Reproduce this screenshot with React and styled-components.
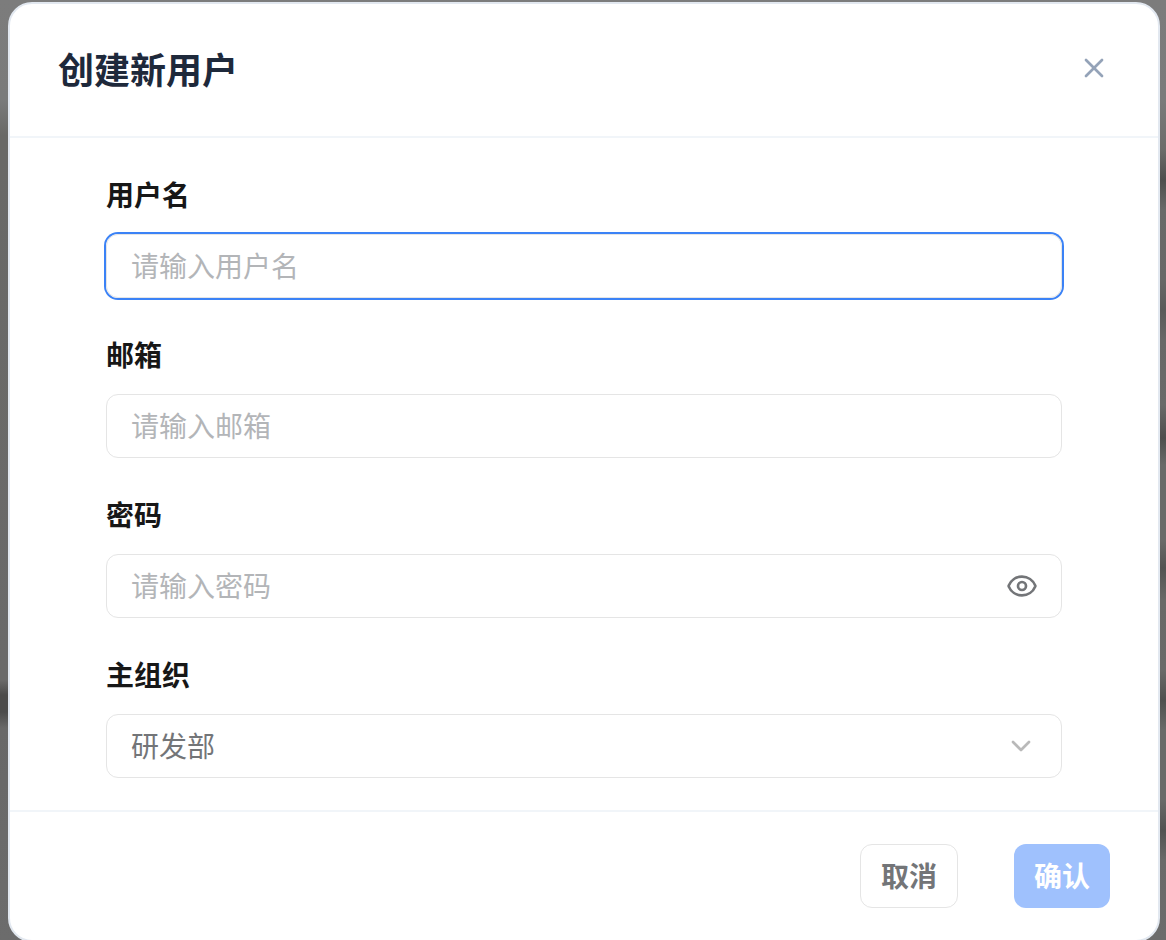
import React, { useState } from 'react';
import styled, { createGlobalStyle } from 'styled-components';
import { ChevronDown, Eye, X } from 'lucide-react';

const GlobalStyle = createGlobalStyle`
  *, *::before, *::after {
    box-sizing: border-box;
  }
  body {
    margin: 0;
    font-family: 'Noto Sans CJK SC', 'Noto Sans', sans-serif;
  }
  button, input, select {
    font-family: inherit;
    margin: 0;
  }
`;

const Overlay = styled.div`
  height: 100vh;
  overflow: hidden;
  padding: 2px 6px 0 8px;
  background:
    linear-gradient(
        #7c7c7c 0,
        #7a7b7b 100px,
        #696967 135px,
        #6a6a6a 680px,
        #4b4b4b 695px,
        #4b4b4b 712px,
        #686868 728px,
        #6c6c6c 940px
      )
      left / 50% 100% no-repeat,
    linear-gradient(
        #7c7c7c 0,
        #7a7b7b 100px,
        #6c6c6a 150px,
        #4e4e4d 180px,
        #696a69 210px,
        #686867 280px,
        #5a5a59 310px,
        #686867 340px,
        #6a6a69 405px,
        #4e4e4d 438px,
        #696a69 465px,
        #6a6a69 540px,
        #535352 568px,
        #696967 600px,
        #6a6a69 670px,
        #4f4f4e 700px,
        #696a69 730px,
        #6a6a69 800px,
        #525251 830px,
        #6a6a69 860px,
        #6c6c6c 940px
      )
      right / 50% 100% no-repeat;
`;

const Dialog = styled.form`
  display: flex;
  flex-direction: column;
  background: #fff;
  border: 2px solid #e2e8f0;
  border-radius: 24px;
`;

const Header = styled.header`
  display: flex;
  align-items: center;
  justify-content: space-between;
  padding: 48px 48px 52px;
  border-bottom: 2px solid #f1f5f9;
`;

const Title = styled.h2`
  margin: 0;
  font-size: 36px;
  line-height: 32px;
  font-weight: 700;
  color: #1e293b;
`;

const IconButton = styled.button`
  display: flex;
  padding: 0;
  border: 0;
  background: none;
  color: ${(props) => props.$color};
  cursor: pointer;
`;

const Body = styled.div`
  display: flex;
  flex-direction: column;
  gap: 32px;
  padding: 32px 96px;
`;

const Field = styled.div`
  display: flex;
  flex-direction: column;
  gap: 16px;
`;

const Label = styled.label`
  font-size: 28px;
  line-height: 48px;
  font-weight: 700;
  color: #171717;
`;

const Control = styled.div`
  display: flex;
  align-items: center;
  height: 64px;
  padding-right: 23px;
  border: 1px solid #e5e5e5;
  border-radius: 12px;

  &:has(input:focus) {
    box-shadow: 0 0 0 2px #3b82f6;
  }
`;

const TextInput = styled.input`
  flex: 1;
  min-width: 0;
  height: 100%;
  padding: 0 0 2px 24px;
  border: 0;
  outline: 0;
  background: none;
  font-size: 28px;
  color: #171717;
  caret-color: transparent;

  &::placeholder {
    color: #b3b5b8;
    opacity: 1;
  }
`;

const SelectBox = styled.div`
  display: grid;
  align-items: center;
  color: #b9b9b9;

  > * {
    grid-area: 1 / 1;
  }
  > svg {
    justify-self: end;
    margin-right: 25px;
    pointer-events: none;
  }
`;

const Select = styled.select`
  appearance: none;
  width: 100%;
  height: 64px;
  padding: 0 64px 2px 24px;
  border: 1px solid #e5e5e5;
  border-radius: 12px;
  background: none;
  font-size: 28px;
  color: #737578;
`;

const Footer = styled.footer`
  display: flex;
  justify-content: flex-end;
  gap: 56px;
  padding: 32px 48px;
  border-top: 2px solid #f1f5f9;
`;

const Button = styled.button`
  height: 64px;
  padding: 0 20px 2px;
  border: ${(props) => (props.$primary ? '0' : '1px solid #e5e5e5')};
  border-radius: 12px;
  background: ${(props) => (props.$primary ? '#9fc1fd' : '#fff')};
  color: ${(props) => (props.$primary ? '#fff' : '#737578')};
  font-size: 28px;
  font-weight: 700;
`;

const App = () => {
  const [values, setValues] = useState({
    username: '',
    email: '',
    password: '',
    org: '研发部',
  });
  const [visible, setVisible] = useState(false);

  const handleChange = (e) =>
    setValues({ ...values, [e.target.name]: e.target.value });

  const complete = values.username && values.email && values.password;

  return (
    <>
      <GlobalStyle />
      <Overlay>
        <Dialog
          role='dialog'
          aria-labelledby='dialog-title'
          onSubmit={(e) => e.preventDefault()}
        >
          <Header>
            <Title id='dialog-title'>创建新用户</Title>
            <IconButton type='button' aria-label='关闭' $color='#94a3b8'>
              <X size={32} />
            </IconButton>
          </Header>
          <Body>
            <Field>
              <Label htmlFor='username'>用户名</Label>
              <Control>
                <TextInput
                  id='username'
                  name='username'
                  placeholder='请输入用户名'
                  value={values.username}
                  onChange={handleChange}
                  autoComplete='off'
                  autoFocus
                />
              </Control>
            </Field>
            <Field>
              <Label htmlFor='email'>邮箱</Label>
              <Control>
                <TextInput
                  id='email'
                  name='email'
                  type='email'
                  placeholder='请输入邮箱'
                  value={values.email}
                  onChange={handleChange}
                />
              </Control>
            </Field>
            <Field>
              <Label htmlFor='password'>密码</Label>
              <Control>
                <TextInput
                  id='password'
                  name='password'
                  type={visible ? 'text' : 'password'}
                  placeholder='请输入密码'
                  value={values.password}
                  onChange={handleChange}
                />
                <IconButton
                  type='button'
                  aria-label='显示密码'
                  $color='#737578'
                  onClick={() => setVisible(!visible)}
                >
                  <Eye size={32} />
                </IconButton>
              </Control>
            </Field>
            <Field>
              <Label htmlFor='org'>主组织</Label>
              <SelectBox>
                <Select
                  id='org'
                  name='org'
                  value={values.org}
                  onChange={handleChange}
                >
                  <option>研发部</option>
                </Select>
                <ChevronDown size={32} />
              </SelectBox>
            </Field>
          </Body>
          <Footer>
            <Button type='button'>取消</Button>
            <Button type='submit' $primary disabled={!complete}>
              确认
            </Button>
          </Footer>
        </Dialog>
      </Overlay>
    </>
  );
};

export default App;
